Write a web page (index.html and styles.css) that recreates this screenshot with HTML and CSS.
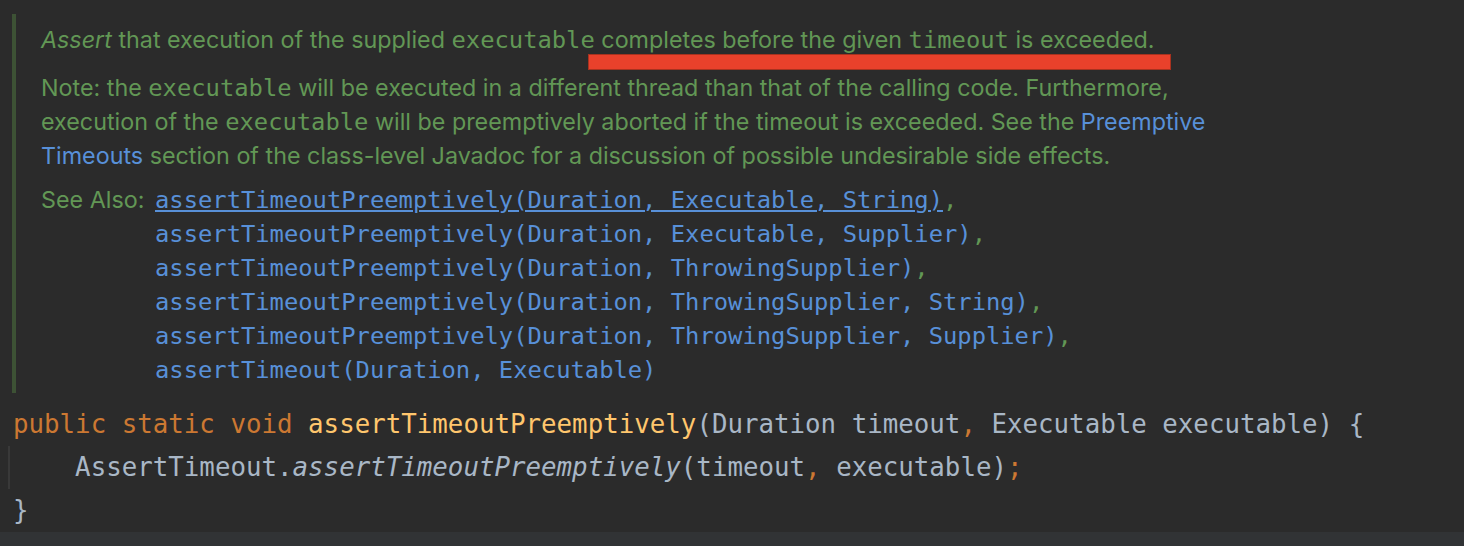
FILE: index.html
```html
<!DOCTYPE html>
<html lang="en">
<head>
   <meta charset="UTF-8">
   <title>assertTimeoutPreemptively</title>
   <link rel="stylesheet" href="styles.css">
</head>
<body>

   <div class="doc">
      <p class="doc-line"><i>Assert</i> that execution of the supplied <code>executable</code> completes before the given <code>timeout</code> is exceeded.</p>
      <p class="doc-para">Note: the <code>executable</code> will be executed in a different thread than that of the calling code. Furthermore,<br>execution of the <code>executable</code> will be preemptively aborted if the timeout is exceeded. See the <a class="link">Preemptive<br>Timeouts</a> section of the class-level Javadoc for a discussion of possible undesirable side effects.</p>
      <div class="see-also">
         <span class="see-label">See Also:</span>
         <div class="see-list">
            <div><a class="ref ref-hover">assertTimeoutPreemptively(Duration, Executable, String)</a>,</div>
            <div><a class="ref">assertTimeoutPreemptively(Duration, Executable, Supplier)</a>,</div>
            <div><a class="ref">assertTimeoutPreemptively(Duration, ThrowingSupplier)</a>,</div>
            <div><a class="ref">assertTimeoutPreemptively(Duration, ThrowingSupplier, String)</a>,</div>
            <div><a class="ref">assertTimeoutPreemptively(Duration, ThrowingSupplier, Supplier)</a>,</div>
            <div><a class="ref">assertTimeout(Duration, Executable)</a></div>
         </div>
      </div>
      <!-- отметка поверх текста -->
      <div class="marker"></div>
   </div>

   <div class="code">
      <div class="code-line"><span class="kw">public static void </span><span class="fn">assertTimeoutPreemptively</span>(Duration timeout<span class="kw">,</span> Executable executable) {</div>
      <div class="code-line indent">    AssertTimeout.<i>assertTimeoutPreemptively</i>(timeout<span class="kw">,</span> executable)<span class="kw">;</span></div>
      <div class="code-line">}</div>
   </div>

   <div class="footer"></div>

</body>
</html>
```

FILE: styles.css
```css
body {
   margin: 0;
   background: #2b2b2b;
   height: 546px;
   overflow: hidden;
}

.doc {
   position: relative;
   margin: 14px 0 0 12px;
   padding: 9px 0 6px 25px;
   border-left: 4px solid #3d5235;
   font-family: Inter, "Noto Sans", sans-serif;
   font-size: 23.3px;
   line-height: 34px;
   color: #629755;
}

.doc p {
   margin: 0;
}

.doc-para {
   margin-top: 14px !important;
}

.doc code {
   font-family: "DejaVu Sans Mono", monospace;
   font-size: 23.8px;
   line-height: 20px;
}

.link {
   color: #5890d8;
}

.see-also {
   display: flex;
   margin-top: 10px;
}

.see-label {
   width: 114px;
   flex-shrink: 0;
}

.see-list {
   font-family: "DejaVu Sans Mono", monospace;
   font-size: 23.8px;
}

.ref {
   color: #5890d8;
}

.ref-hover {
   text-decoration: underline;
   text-decoration-thickness: 2px;
   text-underline-offset: 2px;
}

.marker {
   position: absolute;
   left: 572px;
   top: 40px;
   width: 581px;
   height: 14px;
   background: #e9412b;
   border: 1px solid #a8321f;
}

.code {
   margin-top: 10px;
   padding-left: 13px;
   font-family: "DejaVu Sans Mono", monospace;
   font-size: 25.8px;
   line-height: 43px;
   color: #a9b7c6;
}

.code-line {
   white-space: pre;
}

.indent {
   margin-left: -5px;
   padding-left: 3px;
   border-left: 2px solid #393939;
}

.kw {
   color: #cc7832;
}

.fn {
   color: #ffc66d;
}

.footer {
   height: 14px;
   background: #313335;
}
```
